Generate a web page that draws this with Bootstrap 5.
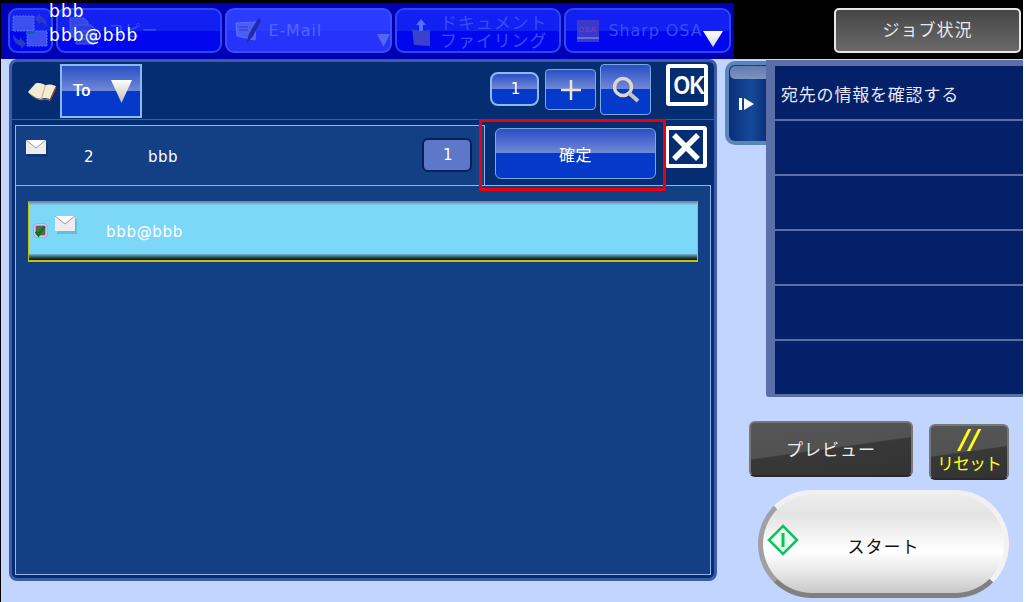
<!DOCTYPE html>
<html lang="ja">
<head>
<meta charset="utf-8">
<title>宛先の情報を確認する</title>
<link href="https://cdn.jsdelivr.net/npm/bootstrap@5.3.0/dist/css/bootstrap.min.css" rel="stylesheet">
<style>
html,body{margin:0;width:1026px;height:602px;overflow:hidden;background:#fff}
body{font-family:"DejaVu Sans","Noto Sans CJK JP",sans-serif;color:#fff}
.screen{width:1023px;height:602px;background:#c1d5ff;border-left:1px solid #000;position:relative;overflow:hidden}
.topbar{height:59px;background:#000;padding-top:3px}
.tabs{width:733px;height:56px;background:#0000b4;padding:5px 3px 0 7px;gap:3px}
.tabbtn{height:45px;border:2px solid #2d49f2;border-radius:9px;background:linear-gradient(#1220f2 0,#1220f2 50%,#0006ee 51%,#0006ee 100%);color:#3b4cff;font-size:16px;letter-spacing:.9px;line-height:18px;position:relative}
.tabbtn.sync{width:45px}
.tabbtn.wide{width:167px}
.tabbtn.lit{background:linear-gradient(#2c3cff 0,#2c3cff 50%,#2634fb 51%,#2634fb 100%);color:#5565ff;border-color:#3a50f5}
.tabicon{flex:none}
.docname{font-size:17px;padding-top:2px}
.tri{position:absolute;right:6px;bottom:4px}
.tri.dim{right:0}
.overlaytext{position:absolute;left:48px;top:-1px;font-size:17px;line-height:24px;letter-spacing:1.1px;z-index:5;white-space:nowrap}
.jobbtn{width:187px;height:45px;margin:5px 0 0 100px;border:2px solid #e8e8e8;border-radius:5px;background:linear-gradient(#464646,#696969);font-size:17px;letter-spacing:1px;color:#e8e8e8}
.mainpanel{width:708px;height:522px;margin:0 0 0 8px;background:#052e72;border:3px solid #3c5cab;border-radius:8px;padding:0}
.toolrow{height:57px;padding:2px 6px 0 15px}
.gloss{background:linear-gradient(#2a4fc4 0,#7088d8 49%,#0439c9 50%,#0439c9 100%);border:1px solid #7da8e8;color:#fff}
.todrop{width:82px;height:54px;border:2px solid #8db8f0;margin-left:3px;font-size:15px;padding-left:11px;letter-spacing:1.500px;text-shadow:.4px 0 0 #fff}
.countbtn{width:49px;height:34px;border-radius:8px;border:2px solid #8db8f0;font-size:15px;margin-right:6px;padding-left:2px}
.plusbtn{width:51px;height:41px;border-radius:4px;margin-right:4px}
.searchbtn{width:51px;height:51px;border-radius:4px;margin-right:15px}
.blackbox{width:42px;height:42px;background:#fff;border-radius:3px;padding:4px;flex:none}
.blackbox>div{width:100%;height:100%;background:#052e72}
.okmark{font-family:"Liberation Sans",sans-serif;font-weight:700;font-size:26px;line-height:34px;overflow:hidden}
.okmark span{display:inline-block;transform:scaleX(.82);letter-spacing:-.5px}
.section{border-top:1px solid #3c5cab;padding:5px 4px 3px 3px;height:462px}
.headrow{height:60px}
.infobox{width:470px;height:60px;background:#134085;border:1px solid #8fb4f0;border-bottom:0;font-size:15px;position:relative;letter-spacing:.5px}
.infoenv{position:absolute;left:10px;top:14px}
.infonum{position:absolute;left:68px;top:20px}
.infoname{position:absolute;left:132px;top:20px}
.qty{position:absolute;left:406px;top:12px;width:50px;height:34px;background:#5d78c8;border:2px solid #071f5c;border-radius:6px;font-size:15px;padding-left:2px}
.confirmbtn{width:161px;height:51px;margin:3px 9px 0 10px;border-radius:6px;font-size:16px;letter-spacing:.6px;padding-top:1px;font-family:"Noto Sans CJK JP",sans-serif}
.xbtn{margin-top:1px}
.bodybox{height:390px;width:696px;background:#134085;border:1px solid #8fb4f0;padding:15px 12px}
.selrow{height:61px;width:670px;background:#7dd8f7;border:1px solid #c4c400;border-top-color:#8f8f20;border-bottom-width:2px;position:relative;font-size:15px;letter-spacing:.7px}
.selrow::before{content:"";position:absolute;left:0;right:0;top:0;height:3px;background:linear-gradient(#7b86a8,#7dd8f7)}
.selrow::after{content:"";position:absolute;left:0;right:0;bottom:0;height:6px;background:linear-gradient(#6cb8d0,#20343c 70%,#0a1014)}
.selcheck{position:absolute;left:4px;top:21px}
.selenv{position:absolute;left:26px;top:14px}
.seltext{position:absolute;left:77px;top:19px}
.redmark{position:absolute;left:478px;top:119px;width:187px;height:72px;border:3px solid #e8000c;z-index:4}
.sidecol{width:298px;margin-left:8px}
.sidetop{height:338px;margin-top:1px}
.sidetab{width:41px;height:84px;margin-top:1px;background:linear-gradient(90deg,#0a2f78,#154a9a 60%,#0d3078);border:4px solid #5a85b8;border-right:0;border-radius:10px 0 0 10px;position:relative;flex:none}
.sidetab::before{content:"";position:absolute;left:1px;right:0;top:1px;height:13px;background:linear-gradient(#5f7bb0,#7f95c0);border-radius:5px 0 0 5px}
.sidelist{width:257px;height:337px;background:#5a6fa8;padding:6px 0 3px 9px;gap:2px;border-bottom-left-radius:3px}
.sideitem{height:53px;background:#042068;font-size:17px;line-height:55px;padding-left:6px;font-family:"Noto Sans CJK JP","DejaVu Sans",sans-serif;letter-spacing:.8px;color:#e8e8f4}
.btnrow{margin:23px 0 0 24px;align-items:flex-start}
.darkbtn{background:linear-gradient(172deg,#555 0,#525252 48%,#383838 50%,#333 100%);border:2px solid #777;border-bottom-color:#2a2a2a;border-radius:6px;color:#eee;font-family:"Noto Sans CJK JP",sans-serif}
.previewbtn{width:164px;height:56px;font-size:17px;letter-spacing:1px}
.resetbtn{width:80px;height:56px;margin:3px 0 0 16px;color:#ffff14;font-size:17px;line-height:20px;letter-spacing:-1px}
.slashes{font-family:"DejaVu Sans",sans-serif;font-style:italic;font-size:27px;line-height:27px;height:27px;letter-spacing:1px;text-shadow:.6px 0 0 #ffff14}
.startbtn{width:251px;height:108px;margin:10px 0 0 33px;border-radius:54px;background:linear-gradient(#ececec 0,#e4e4e4 20%,#fff 58%,#e6e6e6 80%,#c8c8c8 100%);border:5px solid;border-color:#f0f0f0 #f2f2f2 #808080 #a0a0a0;color:#111;font-size:17px;letter-spacing:1px;padding-top:4px;position:relative;font-family:"Noto Sans CJK JP",sans-serif}
.startmark{position:absolute;left:4px;top:29px}
</style>
</head>
<body>
<div class="screen">
  <div class="overlaytext">bbb<br>bbb@bbb</div>
  <div class="topbar d-flex">
    <div class="tabs d-flex">
      <div class="tabbtn sync d-flex align-items-center justify-content-center">
        <svg width="37" height="37" viewBox="0 0 37 37"><rect x="1" y="4" width="21" height="15" fill="#3d50ef" stroke="#5a70f8" stroke-dasharray="2 1"/><rect x="15" y="19" width="20" height="15" fill="#3d50ef" stroke="#5a70f8" stroke-dasharray="2 1"/><path d="M14 19h9v3h-9z" fill="#0f5fa8"/><path d="M23 6l5-5 0 3c5 1 7 6 7 12-2-4-4-6-7-6v3z" fill="#2a3cc0"/><path d="M14 32l-5 5 0-3C4 33 1 28 1 22c2 4 4 6 7 6v-3z" fill="#2a3cc0"/></svg>
      </div>
      <div class="tabbtn wide d-flex align-items-center ps-2">
        <svg class="tabicon" width="34" height="32" viewBox="0 0 34 32"><path d="M4 3h14l4 4v15H4z" fill="#3346e6" stroke="#4358f0"/><path d="M10 10h15l4 4v15H10z" fill="#2d3fd8" stroke="#4358f0"/><path d="M13 16h12M13 20h12M13 24h12" stroke="#4f62f2"/></svg>
        <span class="ms-2">コピー</span>
      </div>
      <div class="tabbtn wide lit d-flex align-items-center ps-2">
        <svg class="tabicon" width="30" height="30" viewBox="0 0 30 30"><path d="M1 7l20-1-1 18-18-4z" fill="#4a5ef0" stroke="#5a70f8"/><path d="M4 11h9M4 14h9" stroke="#2c3cc8"/><path d="M11 28l3-10 8-14c2-3 4-2 4 1l-8 15z" fill="#1e2caa"/></svg>
        <span style="margin-left:3px">E-Mail</span>
        <svg class="tri dim" width="13" height="13" viewBox="0 0 13 13"><path d="M0 0h13L6.500 13z" fill="#5566ee"/></svg>
      </div>
      <div class="tabbtn wide d-flex align-items-center" style="padding-left:13px">
        <svg class="tabicon" width="22" height="30" viewBox="0 0 22 30"><path d="M6 9l5-6 5 6h-3v6H9V9z" fill="#5470f8"/><path d="M2 13l7 2 11-1v16l-16-1z" fill="#3a42cc"/></svg>
        <div class="flex-grow-1 text-center docname pe-1">ドキュメント<br>ファイリング</div>
      </div>
      <div class="tabbtn wide d-flex align-items-center" style="padding-left:11px">
        <svg class="tabicon" width="22" height="22" viewBox="0 0 22 22"><rect width="22" height="22" fill="#3a3ac8"/><rect y="17" width="22" height="2" fill="#6a6ae0"/><text x="1.500" y="12" font-family="Liberation Sans" font-size="7" fill="#a030c0">OSA</text></svg>
        <span style="margin-left:9px">Sharp OSA</span>
        <svg class="tri" width="20" height="16" viewBox="0 0 20 16"><defs><linearGradient id="gt" x1="0" x2="0" y1="0" y2="1"><stop offset="0" stop-color="#fff"/><stop offset="1" stop-color="#d8d8d8"/></linearGradient></defs><path d="M0 0h20L10 16z" fill="url(#gt)"/></svg>
      </div>
    </div>
    <div class="jobbtn d-flex align-items-center justify-content-center">ジョブ状況</div>
  </div>
  <div class="d-flex">
    <div class="mainpanel">
      <div class="toolrow d-flex align-items-start">
        <svg class="mt-3" width="30" height="22" viewBox="0 0 31 22"><path d="M1 12L9 3c4-1 7 0 10 2 3-1 7-1 11 1l-6 14c-3-2-7-2-9-1-5 0-10-3-14-7z" fill="#f3ecd2"/><path d="M19 5l-4 14" stroke="#b8ab82"/><path d="M2 13c4 4 9 7 13 7 3-1 6-1 9 1" stroke="#a08c60" fill="none"/><path d="M24 20l6-13" stroke="#b04030" stroke-width="1.500"/></svg>
        <div class="gloss todrop d-flex align-items-center position-relative">To
          <svg class="position-absolute end-0 me-2" width="21" height="23" viewBox="0 0 21 23"><defs><linearGradient id="gd" x1="0" x2="0" y1="0" y2="1"><stop offset="0" stop-color="#fff"/><stop offset="1" stop-color="#bdbdb0"/></linearGradient></defs><path d="M0 0h21L10.500 23z" fill="url(#gd)"/></svg>
        </div>
        <div class="ms-auto d-flex align-items-start">
          <div class="gloss countbtn d-flex align-items-center justify-content-center mt-2">1</div>
          <div class="gloss plusbtn d-flex align-items-center justify-content-center" style="margin-top:5px">
            <svg width="20" height="20" viewBox="0 0 20 20"><path d="M10 0v20M0 10h20" stroke="#e8e4d8" stroke-width="2.500"/></svg>
          </div>
          <div class="gloss searchbtn d-flex align-items-center justify-content-center">
            <svg width="28" height="28" viewBox="0 0 28 28"><circle cx="11" cy="11" r="8.500" fill="none" stroke="#ddd8c8" stroke-width="3.500"/><path d="M17 17l9 8" stroke="#c8c4b4" stroke-width="4"/></svg>
          </div>
          <div class="blackbox"><div class="okmark text-center"><span>OK</span></div></div>
        </div>
      </div>
      <div class="section">
        <div class="headrow d-flex">
          <div class="infobox">
            <svg class="infoenv" width="22" height="17" viewBox="0 0 22 17"><rect x="2" y="3" width="20" height="14" fill="#0a2450" opacity=".4"/><rect width="20" height="14" fill="#ececec"/><path d="M0 0l10 8 10-8" fill="#fff" stroke="#999"/></svg>
            <span class="infonum">2</span><span class="infoname">bbb</span>
            <div class="qty d-flex align-items-center justify-content-center">1</div>
          </div>
          <div class="gloss confirmbtn d-flex align-items-center justify-content-center">確定</div>
          <div class="blackbox xbtn">
            <div class="d-flex align-items-center justify-content-center"><svg width="30" height="30" viewBox="0 0 30 30"><path d="M3 3l24 24M27 3L3 27" stroke="#fff" stroke-width="5.500"/></svg></div>
          </div>
        </div>
        <div class="bodybox">
          <div class="selrow">
            <svg class="selcheck" width="15" height="15" viewBox="0 0 15 15"><rect x=".8" y=".8" width="13.400" height="13.400" rx="3" fill="#eef0fb" stroke="#a8a8f0" stroke-width="1.500"/><rect x="2.500" y="2.500" width="10" height="10" rx="1" fill="#5a665a"/><path d="M3 8.500l2.500 3.500L11.500 3.500" stroke="#0c7a14" stroke-width="3" fill="none"/></svg>
            <svg class="selenv" width="22" height="18" viewBox="0 0 22 18"><rect x="2" y="3" width="20" height="15" fill="#3a8cab" opacity=".35"/><rect width="20" height="15" fill="#ececec"/><path d="M0 0l10 8 10-8" fill="#fff" stroke="#999"/></svg>
            <span class="seltext">bbb@bbb</span>
          </div>
        </div>
      </div>
    </div>
    <div class="sidecol">
      <div class="sidetop d-flex">
        <div class="sidetab d-flex align-items-center justify-content-center">
          <svg width="15" height="12" viewBox="0 0 15 12" style="margin:2px 3px 0 0"><path d="M0 0h3v12H0zM5 0l10 6-10 6z" fill="#fff"/></svg>
        </div>
        <div class="sidelist d-flex flex-column">
          <div class="sideitem">宛先の情報を確認する</div>
          <div class="sideitem"></div>
          <div class="sideitem"></div>
          <div class="sideitem"></div>
          <div class="sideitem"></div>
          <div class="sideitem"></div>
        </div>
      </div>
      <div class="btnrow d-flex">
        <div class="darkbtn previewbtn d-flex align-items-center justify-content-center">プレビュー</div>
        <div class="darkbtn resetbtn text-center">
          <div class="slashes">//</div>リセット
        </div>
      </div>
      <div class="startbtn d-flex align-items-center justify-content-center">
        <svg class="startmark" width="32" height="32" viewBox="0 0 32 32"><path d="M16 2l14 14-14 14L2 16z" fill="#e8fff0" stroke="#10c060" stroke-width="2.500"/><path d="M16 9v14" stroke="#10c060" stroke-width="3"/></svg>
        スタート
      </div>
    </div>
  </div>
  <div class="redmark"></div>
</div>
<script src="https://cdn.jsdelivr.net/npm/bootstrap@5.3.0/dist/js/bootstrap.bundle.min.js"></script>
</body>
</html>
